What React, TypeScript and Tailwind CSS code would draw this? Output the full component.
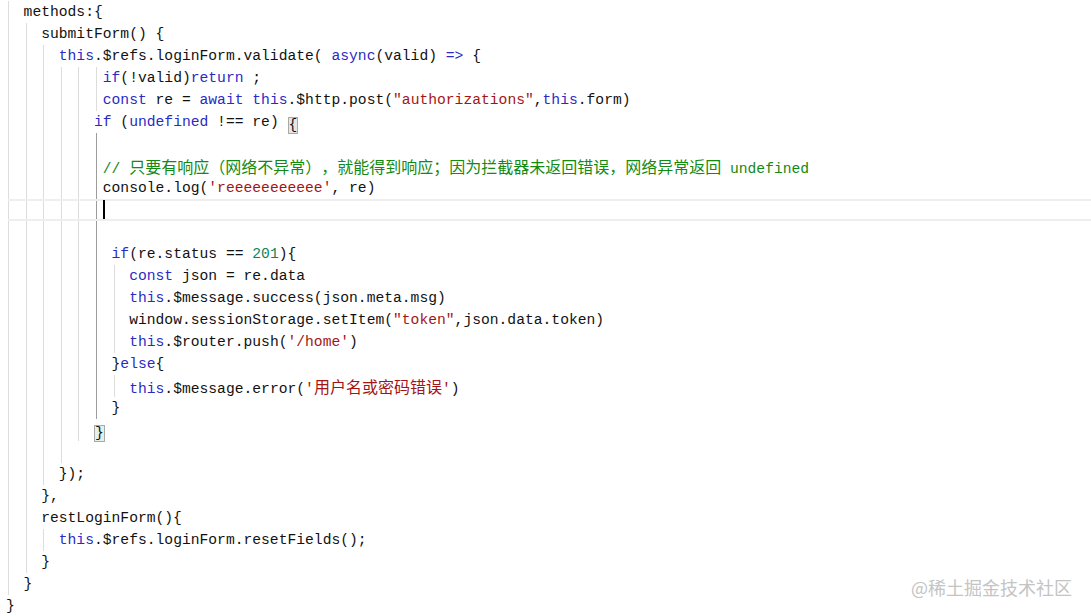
import React from "react";

type Tok = [string, string];
type Line = {
  indent: number;
  guides: number[];
  active?: number[];
  toks: Tok[];
  cursor?: boolean;
  current?: boolean;
};

const D = "text-[#111111]";
const K = "text-[#2a2ac4]";
const S = "text-[#a31515]";
const N = "text-[#098658]";
const C = "text-[#138a13]";
const OPEN = "OPEN";
const CLOSE = "CLOSE";

const lines: Line[] = [
  { indent: 2, guides: [0], toks: [["methods:{", D]] },
  { indent: 4, guides: [0, 2], toks: [["submitForm() {", D]] },
  {
    indent: 6,
    guides: [0, 2, 4],
    toks: [
      ["this", K],
      [".$refs.loginForm.validate( ", D],
      ["async", K],
      ["(valid) ", D],
      ["=>", K],
      [" {", D],
    ],
  },
  {
    indent: 11,
    guides: [0, 2, 4, 6, 8, 10],
    toks: [
      ["if", K],
      ["(!valid)", D],
      ["return", K],
      [" ;", D],
    ],
  },
  {
    indent: 11,
    guides: [0, 2, 4, 6, 8, 10],
    toks: [
      ["const", K],
      [" re = ", D],
      ["await", K],
      [" ", D],
      ["this", K],
      [".$http.post(", D],
      ['"authorizations"', S],
      [",", D],
      ["this", K],
      [".form)", D],
    ],
  },
  {
    indent: 10,
    guides: [0, 2, 4, 6, 8],
    toks: [
      ["if", K],
      [" (", D],
      ["undefined", K],
      [" !== re) ", D],
      ["{", OPEN],
    ],
  },
  { indent: 12, guides: [0, 2, 4, 6, 8], active: [10], toks: [] },
  {
    indent: 11,
    guides: [0, 2, 4, 6, 8],
    active: [10],
    toks: [["// 只要有响应（网络不异常），就能得到响应；因为拦截器未返回错误，网络异常返回 undefined", C]],
  },
  {
    indent: 11,
    guides: [0, 2, 4, 6, 8],
    active: [10],
    toks: [
      ["console.log(", D],
      ["'reeeeeeeeeee'", S],
      [", re)", D],
    ],
  },
  { indent: 11, guides: [0, 2, 4, 6, 8], active: [10], toks: [], cursor: true, current: true },
  { indent: 12, guides: [0, 2, 4, 6, 8], active: [10], toks: [] },
  {
    indent: 12,
    guides: [0, 2, 4, 6, 8],
    active: [10],
    toks: [
      ["if", K],
      ["(re.status == ", D],
      ["201", N],
      ["){", D],
    ],
  },
  {
    indent: 14,
    guides: [0, 2, 4, 6, 8, 12],
    active: [10],
    toks: [
      ["const", K],
      [" json = re.data", D],
    ],
  },
  {
    indent: 14,
    guides: [0, 2, 4, 6, 8, 12],
    active: [10],
    toks: [
      ["this", K],
      [".$message.success(json.meta.msg)", D],
    ],
  },
  {
    indent: 14,
    guides: [0, 2, 4, 6, 8, 12],
    active: [10],
    toks: [
      ["window.sessionStorage.setItem(", D],
      ['"token"', S],
      [",json.data.token)", D],
    ],
  },
  {
    indent: 14,
    guides: [0, 2, 4, 6, 8, 12],
    active: [10],
    toks: [
      ["this", K],
      [".$router.push(", D],
      ["'/home'", S],
      [")", D],
    ],
  },
  {
    indent: 12,
    guides: [0, 2, 4, 6, 8],
    active: [10],
    toks: [
      ["}", D],
      ["else", K],
      ["{", D],
    ],
  },
  {
    indent: 14,
    guides: [0, 2, 4, 6, 8, 12],
    active: [10],
    toks: [
      ["this", K],
      [".$message.error(", D],
      ["'用户名或密码错误'", S],
      [")", D],
    ],
  },
  { indent: 12, guides: [0, 2, 4, 6, 8], active: [10], toks: [["}", D]] },
  { indent: 10, guides: [0, 2, 4, 6, 8], toks: [["}", CLOSE]] },
  { indent: 8, guides: [0, 2, 4, 6], toks: [] },
  { indent: 6, guides: [0, 2, 4], toks: [["});", D]] },
  { indent: 4, guides: [0, 2], toks: [["},", D]] },
  { indent: 4, guides: [0, 2], toks: [["restLoginForm(){", D]] },
  {
    indent: 6,
    guides: [0, 2, 4],
    toks: [
      ["this", K],
      [".$refs.loginForm.resetFields();", D],
    ],
  },
  { indent: 4, guides: [0, 2], toks: [["}", D]] },
  { indent: 2, guides: [0], toks: [["}", D]] },
  { indent: 0, guides: [], toks: [["}", D]] },
];

// split text into latin / CJK runs so CJK gets its own 16px full-width cell
function Runs({ text }: { text: string }) {
  const parts = text.split(/([\u3000-\u303f\u4e00-\u9fff\uff00-\uffef]+)/);
  return (
    <>
      {parts.map((p, i) =>
        i % 2 === 1 ? (
          <span
            key={i}
            className="text-[16px] leading-[22px] [text-spacing-trim:space-all] font-['Noto_Sans_CJK_SC',sans-serif]"
          >
            {p}
          </span>
        ) : (
          <span key={i}>{p}</span>
        )
      )}
    </>
  );
}

function Token({ tok }: { tok: Tok }) {
  const [text, color] = tok;
  if (color === OPEN || color === CLOSE) {
    return (
      <span
        className={`inline-block h-[17px] leading-[15px] align-[-3px] border border-[#a9a9a9] ${
          color === OPEN ? "bg-[#e6e6e6]" : "bg-[#e4f0f0]"
        } text-[#111111]`}
      >
        {text}
      </span>
    );
  }
  return (
    <span className={color}>
      <Runs text={text} />
    </span>
  );
}

function CodeLine({ line }: { line: Line }) {
  const cells: { col: number; w: number }[] = [];
  for (let c = 0; c < line.indent; c += 2) {
    cells.push({ col: c, w: Math.min(2, line.indent - c) });
  }
  return (
    <div className="flex h-[22px] leading-[22px]">
      <div className="w-[8px] shrink-0" />
      <div
        className={`flex flex-1 min-w-0 ${
          line.current ? "border-y-2 border-[#eeeeee]" : ""
        }`}
      >
        {cells.map(({ col, w }) => {
          const guide = line.guides.includes(col);
          const active = line.active?.includes(col);
          return (
            <div
              key={col}
              className={`shrink-0 h-full ${w === 2 ? "w-[17.6px]" : "w-[8.8px]"} ${
                active
                  ? "border-l border-[#9c9c9c]"
                  : guide
                  ? "border-l border-[#dcdcdc]"
                  : ""
              }`}
            />
          );
        })}
        {line.cursor && <div className="w-[2px] h-[19px] -ml-[2px] mt-[-1px] bg-black shrink-0" />}
        <span className="-ml-[2px] whitespace-pre [text-spacing-trim:space-all]">
          {line.toks.map((t, i) => (
            <Token key={i} tok={t} />
          ))}
        </span>
      </div>
    </div>
  );
}

export default function App() {
  return (
    <div className="relative w-[1091px] h-[616px] bg-white overflow-hidden pt-[1px] font-['Liberation_Mono',monospace] text-[14.67px] text-[#111111]">
      {lines.map((line, i) => (
        <CodeLine key={i} line={line} />
      ))}
      <div className="absolute right-[19px] bottom-[18px] text-[18px] leading-[22px] text-[#c4c4c4] font-['Noto_Sans_CJK_SC',sans-serif]">
        @稀土掘金技术社区
      </div>
    </div>
  );
}
